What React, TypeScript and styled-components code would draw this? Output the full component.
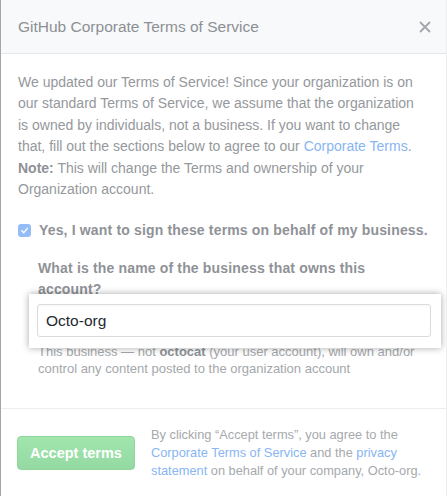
import React from "react";
import styled, { createGlobalStyle } from "styled-components";

const Global = createGlobalStyle`
  html, body { margin: 0; padding: 0; background: #ffffff; }
  body { font-family: "Liberation Sans", Arial, sans-serif; }
  * { box-sizing: border-box; }
`;

const Dialog = styled.div`
  width: 447px;
  height: 496px;
  overflow: hidden;
  border-left: 1px solid #a3a7ab;
  border-right: 1px solid #eceef0;
  background: #ffffff;
  display: flex;
  flex-direction: column;
`;

const Header = styled.div`
  height: 54px;
  flex: none;
  display: flex;
  align-items: center;
  justify-content: space-between;
  padding: 0 13px 0 17px;
  background: #f8f9fa;
  border-bottom: 1px solid #e5e7e9;
`;

const Title = styled.h1`
  margin: 0;
  font-size: 15.5px;
  font-weight: 500;
  color: #8c9095;
  padding-top: 1px;
`;

const Close = styled.button`
  border: 0;
  background: none;
  padding: 0;
  width: 16px;
  height: 16px;
  display: flex;
  align-items: center;
  justify-content: center;
  color: #a3a6aa;
`;

const Body = styled.div`
  flex: none;
  height: 355px;
  padding: 18px 17px 0 17px;
  border-bottom: 1px solid #eceef0;
`;

const Intro = styled.p`
  margin: 0 0 20px;
  width: 406px;
  font-size: 14px;
  line-height: 21.4px;
  color: #95989c;
`;

const Strong = styled.strong<{ $tone?: string }>`
  font-weight: 700;
  color: ${(p) => p.$tone ?? "#8e9196"};
`;

const Link = styled.a`
  color: #88b5f3;
  text-decoration: none;
`;

const CheckRow = styled.label`
  display: flex;
  align-items: center;
  gap: 8px;
  font-size: 14px;
  line-height: 21px;
  font-weight: 700;
  letter-spacing: 0.16px;
  color: #8f9297;
`;

const Box = styled.span`
  width: 13px;
  height: 13px;
  border-radius: 3px;
  background: #94bdf7;
  display: flex;
  align-items: center;
  justify-content: center;
`;

const Field = styled.div`
  padding-left: 20px;
  margin-top: 17px;
`;

const Question = styled.div`
  font-size: 14px;
  line-height: 21px;
  font-weight: 700;
  letter-spacing: 0.16px;
  color: #8f9297;
  width: 345px;
`;

const Spotlight = styled.div`
  position: relative;
  z-index: 1;
  margin: -6px -12px -4px -9px;
  padding: 10px 10px 11px 8px;
  background: #ffffff;
  box-shadow: 0 0 7px rgba(0, 0, 0, 0.35);
`;

const Input = styled.div`
  height: 33px;
  border: 1px solid #d9dcdf;
  border-radius: 3px;
  padding: 0 8px;
  display: flex;
  align-items: center;
  font-size: 15.5px;
  color: #24292e;
  box-shadow: inset 0 1px 2px rgba(27, 31, 35, 0.04);
`;

const Note = styled.p`
  margin: 0;
  font-size: 13px;
  line-height: 16.5px;
  color: #a4a7ab;
`;

const Footer = styled.div`
  flex: 1;
  display: flex;
  align-items: flex-start;
  gap: 16px;
  padding: 17px 16px 0 16px;
`;

const AcceptButton = styled.button`
  flex: none;
  margin-top: 10px;
  width: 118px;
  height: 34px;
  border: 1px solid #8fd69c;
  border-radius: 4px;
  background: linear-gradient(#a2e6ae, #93d9a1);
  color: #ffffff;
  font-family: inherit;
  font-size: 14.5px;
  font-weight: 700;
  padding: 0;
`;

const Legal = styled.p`
  margin: 0;
  width: 285px;
  font-size: 12.8px;
  line-height: 18px;
  color: #a6a9ad;
`;

export default function App() {
  return (
    <>
      <Global />
      <Dialog>
        <Header>
          <Title>GitHub Corporate Terms of Service</Title>
          <Close aria-label="Close">
            <svg width="12" height="12" viewBox="0 0 12 12">
              <path d="M1.5 1.5 L10.5 10.5 M10.5 1.5 L1.5 10.5" stroke="currentColor" strokeWidth="1.8" strokeLinecap="round" />
            </svg>
          </Close>
        </Header>
        <Body>
          <Intro>
            We updated our Terms of Service! Since your organization is on our standard Terms of Service, we assume
            that the organization is owned by individuals, not a business. If you want to change that, fill out the
            sections below to agree to our <Link href="#">Corporate Terms</Link>.{" "}
            <Strong>Note:</Strong> This will change the Terms and ownership of your Organization account.
          </Intro>
          <CheckRow>
            <Box>
              <svg width="9" height="9" viewBox="0 0 10 10">
                <path d="M2 5.2 L4.2 7.4 L8.2 2.6" fill="none" stroke="#ffffff" strokeWidth="1.6" strokeLinecap="round" strokeLinejoin="round" />
              </svg>
            </Box>
            Yes, I want to sign these terms on behalf of my business.
          </CheckRow>
          <Field>
            <Question>What is the name of the business that owns this account?</Question>
            <Spotlight>
              <Input>Octo-org</Input>
            </Spotlight>
            <Note>
              This business — not <Strong $tone="#8e9196">octocat</Strong> (your user account), will own and/or
              control any content posted to the organization account
            </Note>
          </Field>
        </Body>
        <Footer>
          <AcceptButton>Accept terms</AcceptButton>
          <Legal>
            By clicking “Accept terms”, you agree to the <Link href="#">Corporate Terms of Service</Link> and the{" "}
            <Link href="#">privacy statement</Link> on behalf of your company, Octo-org.
          </Legal>
        </Footer>
      </Dialog>
    </>
  );
}
